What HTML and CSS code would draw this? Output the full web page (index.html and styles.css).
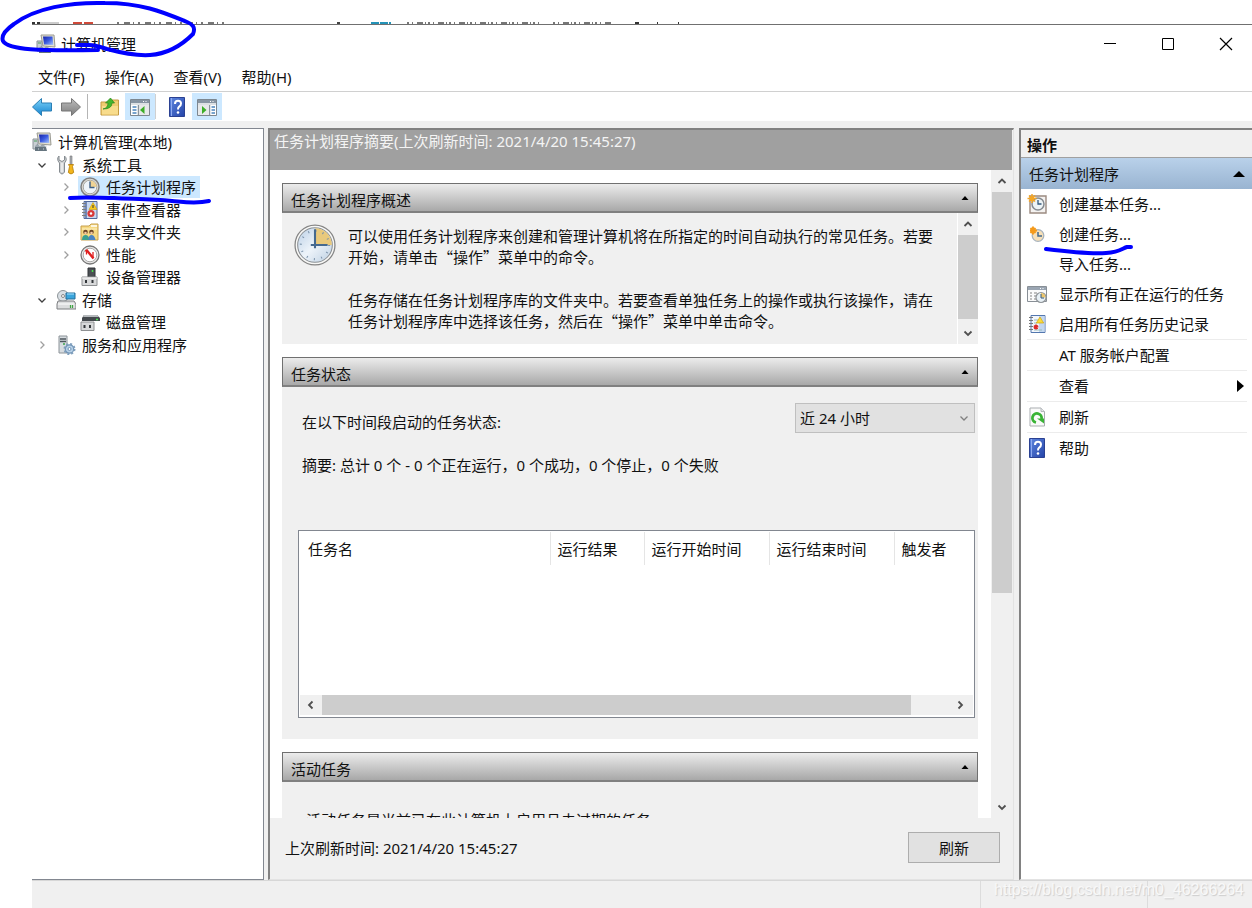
FILE: index.html
```html
<!DOCTYPE html>
<html lang="zh-CN">
<head>
<meta charset="utf-8">
<title>计算机管理</title>
<link rel="stylesheet" href="styles.css">
</head>
<body>
<svg class="defs" width="0" height="0" aria-hidden="true">
  <defs>
    <linearGradient id="g-screen" x1="0" y1="0" x2="1" y2="1"><stop offset="0" stop-color="#1522a8"/><stop offset=".5" stop-color="#3b5be0"/><stop offset="1" stop-color="#a8c8ff"/></linearGradient>
    <linearGradient id="g-help" x1="0" y1="0" x2="1" y2="1"><stop offset="0" stop-color="#5f88e0"/><stop offset="1" stop-color="#2443a8"/></linearGradient>
    <linearGradient id="g-blue" x1="0" y1="0" x2="0" y2="1"><stop offset="0" stop-color="#7fd4fa"/><stop offset="1" stop-color="#1583cf"/></linearGradient>
    <linearGradient id="g-gray" x1="0" y1="0" x2="0" y2="1"><stop offset="0" stop-color="#bdbdbd"/><stop offset="1" stop-color="#7d7d7d"/></linearGradient>
    <linearGradient id="g-face" x1="0" y1="0" x2="1" y2="1"><stop offset="0" stop-color="#b9cfe6"/><stop offset=".5" stop-color="#eef4fa"/><stop offset="1" stop-color="#bccfe2"/></linearGradient>
    <symbol id="i-computer" viewBox="0 0 20 20">
      <path d="M1 7h5v10H1z" fill="#c9cfd3" stroke="#8b9399"/><path d="M2 9h3" stroke="#4b9b5a"/>
      <path d="M5 1l13 0 1 12-12-1z" fill="#e3e1d2" stroke="#9a9a92"/>
      <path d="M7 2.500h9.500l.8 8.500-9.300-.6z" fill="url(#g-screen)"/>
      <path d="M3 14q2-3 5 0 3-3 6 1l1 4H3z" fill="#66757f"/><path d="M3 14h12M6 17h1m4 0h1" stroke="#cfd8dd" stroke-width="1.200"/>
    </symbol>
    <symbol id="i-tools" viewBox="0 0 20 20">
      <path d="M3 1v4l3 1.500L8.500 5V1Q12 4 8.500 8v9q-2.500 4-5 0V8Q0 4 3 1z" fill="#d0d3d5" stroke="#858b90"/><path d="M6 8v9" stroke="#fff"/>
      <path d="M14 1h2v9h-2z" fill="#a8adb2" stroke="#777" stroke-width=".6"/><path d="M12.500 9.500h5l-1 2 1.200 6q-2.700 3-5.400 0l1.200-6z" fill="#f2b51d" stroke="#b37c0a" stroke-width=".8"/>
    </symbol>
    <symbol id="i-clock" viewBox="0 0 40 40">
      <circle cx="20" cy="20" r="19" fill="#f8f8f6" stroke="#858585" stroke-width="1.200"/>
      <circle cx="20" cy="20" r="16.500" fill="url(#g-face)" stroke="#8a8f94" stroke-width="1"/>
      <path d="M20 20V4A16 16 0 0 1 36 20z" fill="#e9c97c"/>
      <circle cx="20" cy="20" r="13.500" fill="none" stroke="#7c93ab" stroke-width="2" stroke-dasharray="1 6.070"/>
      <path d="M20 5v18M16 20h16" stroke="#45698f" stroke-width="2"/>
    </symbol>
    <symbol id="i-clock-s" viewBox="0 0 20 20">
      <circle cx="10" cy="10" r="9" fill="#dfddd7" stroke="#828282" stroke-width="1.500"/>
      <circle cx="10" cy="10" r="6.800" fill="#eef4fa" stroke="#a5a5a0"/>
      <path d="M10 10V3.500A6.500 6.500 0 0 1 16.500 10z" fill="#efd395"/><path d="M10 4.500V10.500h4.500" fill="none" stroke="#3d5f86" stroke-width="1.400"/>
    </symbol>
    <symbol id="i-event" viewBox="0 0 20 20">
      <path d="M4 1.500h13v17H4z" fill="#c7d8f1" stroke="#52699b"/><path d="M5 2h2v16H5z" fill="#7188b8"/>
      <path d="M2 3.500h4M2 6.500h4M2 9.500h4M2 12.500h4M2 15.500h4" stroke="#7d7d7d" stroke-width="1.200"/>
      <path d="M13 2.500l4 7H9z" fill="#f9ca1e" stroke="#c89a08" stroke-width=".6"/><path d="M13 5v3" stroke="#333"/>
      <circle cx="11" cy="13.500" r="3.600" fill="#d93a3a"/><circle cx="11" cy="13.500" r="1.200" fill="#fff"/>
    </symbol>
    <symbol id="i-history" viewBox="0 0 20 20">
      <path d="M4 1.500h14v17H4z" fill="#f2f6fc" stroke="#5377ae"/><path d="M12 2h5.500v16H12z" fill="#c3d7f0"/>
      <path d="M2 3.500h4M2 6.500h4M2 9.500h4M2 12.500h4M2 15.500h4" stroke="#777" stroke-width="1.200"/>
      <path d="M7 6h4M7 9h3M7 16h8" stroke="#9bb" />
      <path d="M13 3l3.700 6H9.300z" fill="#fadb3c" stroke="#d3a50b" stroke-width=".7"/><path d="M9 10.500v5M6.800 11.700l4.400 2.600M11.200 11.700l-4.400 2.600" stroke="#dc2a2a" stroke-width="1.700"/>
    </symbol>
    <symbol id="i-share" viewBox="0 0 20 20">
      <path d="M1 4h8l2-2h7v16H1z" fill="#f6d983" stroke="#c7a04c"/><path d="M11 4h6" stroke="#fff" stroke-width="1.500"/><path d="M2 7h15" stroke="#fdf0c4"/>
      <circle cx="5.500" cy="10" r="2.300" fill="#6b4426"/><path d="M2 18q0-5 3.500-5t4 5z" fill="#3aa08f"/>
      <circle cx="11.500" cy="10" r="2.300" fill="#6b4426"/><path d="M8.500 18q0-5 3-5t4 5z" fill="#4a83c4"/><circle cx="5.500" cy="11" r="1.300" fill="#f3caa3"/><circle cx="11.500" cy="11" r="1.300" fill="#f3caa3"/>
    </symbol>
    <symbol id="i-perf" viewBox="0 0 20 20">
      <circle cx="10" cy="10" r="9" fill="#ecebea" stroke="#777" stroke-width="1.300"/><circle cx="10" cy="10" r="6.800" fill="#fff" stroke="#a8a8a8"/>
      <path d="M5.500 6.500l1.500-1 6.500 8" fill="none" stroke="#e02020" stroke-width="2.400"/><path d="M6.500 6v3.500M13 7v6" stroke="#e02020" stroke-width="1.300"/>
    </symbol>
    <symbol id="i-device" viewBox="0 0 20 20">
      <path d="M8 1h7v10H8z" fill="#4b5054" stroke="#303336"/><path d="M12.500 3v2" stroke="#48e04c" stroke-width="1.500"/>
      <path d="M2 10h15v8.500H2z" fill="#d8d9da" stroke="#8e9092"/><path d="M2 11h15" stroke="#fff"/><path d="M6 13v3M12.500 13v3" stroke="#33373a" stroke-width="2"/>
    </symbol>
    <symbol id="i-storage" viewBox="0 0 20 20">
      <circle cx="7" cy="6" r="5.500" fill="#d9dfe4" stroke="#8d9498"/><circle cx="7" cy="6" r="1.500" fill="#fff" stroke="#888"/>
      <path d="M10 3h9v6h-9z" fill="#3aa5dc" stroke="#256f9b"/><path d="M11 4h7" stroke="#a8e2ff"/>
      <path d="M2 11h16l2 3v5H1v-5z" fill="#dcddde" stroke="#7d7f81"/><path d="M2 14h16" stroke="#fff"/><path d="M14.500 15v3m2-3v3" stroke="#42a544" stroke-width="1.200"/>
    </symbol>
    <symbol id="i-disk" viewBox="0 0 20 20">
      <path d="M4 3h13l3 3v3H2V6z" fill="#44494d"/><path d="M4 3h13l2 2H3z" fill="#b5b9bc"/><path d="M16 7.500h2" stroke="#4be253" stroke-width="1.500"/>
      <path d="M1 10h13v8.500H1z" fill="#d8d9da" stroke="#8e9092"/><path d="M4.500 13v3m5.500-3v3" stroke="#33373a" stroke-width="2"/>
    </symbol>
    <symbol id="i-services" viewBox="0 0 20 20">
      <path d="M3 1h8v17H3z" fill="#d7dce0" stroke="#8c9398"/><path d="M4 4h6M4 6.500h6" stroke="#4d565c" stroke-width="1.300"/><path d="M7 9h2" stroke="#3aa54a" stroke-width="1.500"/>
      <circle cx="13.500" cy="14" r="4.200" fill="#b8d1e8" stroke="#6f93b5" stroke-width="1.200"/><circle cx="13.500" cy="14" r="5" fill="none" stroke="#7f9fbd" stroke-width="2" stroke-dasharray="2 1.930"/><circle cx="13.500" cy="14" r="1.500" fill="#fff" stroke="#6f93b5"/>
    </symbol>
    <symbol id="i-back" viewBox="0 0 20 20"><path d="M.5 10l9-8.500V6H19.500v8H9.500v4.500z" fill="url(#g-blue)" stroke="#2b7fb5"/></symbol>
    <symbol id="i-forward" viewBox="0 0 20 20"><path d="M19.500 10l-9-8.500V6H.5v8h10v4.500z" fill="url(#g-gray)" stroke="#777"/></symbol>
    <symbol id="i-folder" viewBox="0 0 20 20">
      <path d="M1 5h9l2-2h6.500v15H1z" fill="#f0cc70" stroke="#c59b42"/><path d="M2 9h16v8.500H2z" fill="#f8dc8c"/>
      <path d="M3 12q5-1 5-6H5.500L10.500 1l4 5H12q0 6-9 6z" fill="#45b52d" stroke="#28881b" stroke-width=".7"/>
    </symbol>
    <symbol id="i-pane-left" viewBox="0 0 20 20">
      <path d="M.5 2.500h19v16H.5z" fill="#fff" stroke="#7d8790"/><path d="M1 3h18v3H1z" fill="#8795a3"/><path d="M13 4.500h1m1.500 0h1" stroke="#fff"/><path d="M1 7h18" stroke="#b9c1c8"/>
      <path d="M8.500 8v10" stroke="#8b949c" stroke-width="1.500"/><path d="M2.500 10h4m-4 3h4m-4 3h4" stroke="#4a84bd" stroke-width="1.300"/><path d="M10 8h9v10h-9z" fill="#e7e9ea"/><path d="M14.500 9v8L10 13z" fill="#3cae28"/>
    </symbol>
    <symbol id="i-pane-right" viewBox="0 0 20 20">
      <path d="M.5 2.500h19v16H.5z" fill="#fff" stroke="#7d8790"/><path d="M1 3h18v3H1z" fill="#8795a3"/><path d="M13 4.500h1m1.500 0h1" stroke="#fff"/><path d="M1 7h18" stroke="#b9c1c8"/>
      <path d="M12.500 8v10" stroke="#8b949c" stroke-width="1.500"/><path d="M14.500 10h3.500m-3.500 3h3.500m-3.500 3h3.500" stroke="#4a84bd" stroke-width="1.300"/><path d="M1 8h11v10H1z" fill="#e7e9ea"/><path d="M5 9v8l4.500-4z" fill="#3cae28"/>
    </symbol>
    <symbol id="i-help" viewBox="0 0 20 20">
      <path d="M2.500.5h15v19h-15z" fill="url(#g-help)" stroke="#2b4192"/><path d="M4.500 1v18" stroke="#8faaf0"/>
      <path d="M8 7q0-3.300 3-3.300T14 6.500q0 1.800-1.600 2.900T11 12.500" fill="none" stroke="#fff" stroke-width="2"/><circle cx="11" cy="15.500" r="1.300" fill="#fff"/>
    </symbol>
    <symbol id="i-basic-task" viewBox="0 0 20 20">
      <path d="M3 2h16v17H3z" fill="#f4f2f0" stroke="#9b8a80" stroke-width="1.400"/><circle cx="11" cy="10" r="6" fill="#edf3f5" stroke="#858a90" stroke-width="1.500"/><path d="M11 6v4h3.500" fill="none" stroke="#32587c" stroke-width="1.300"/>
      <path d="M5 0v9M.5 4.500h9M2 1.500l6 6M8 1.500l-6 6" stroke="#f5a623" stroke-width="1.500"/>
    </symbol>
    <symbol id="i-task" viewBox="0 0 20 20">
      <circle cx="11" cy="11.500" r="5.800" fill="#f7e0b8" stroke="#a8b3bd" stroke-width="1.300"/><path d="M11 8v4h4" fill="none" stroke="#42688e" stroke-width="1.500"/>
      <path d="M6 2.500v8M3.500 4l5 5M8.500 4l-5 5M3 6.500h7" stroke="#f59a1a" stroke-width="1.900"/>
    </symbol>
    <symbol id="i-running" viewBox="0 0 20 20">
      <path d="M.5 2.500h19v15H.5z" fill="#fafafa" stroke="#888f96"/><path d="M1 3h18v3H1z" fill="#9aa5b2"/><path d="M13 4.500h1m1.500 0h1" stroke="#fff"/>
      <path d="M3 9h2m2 0h3m-7 3h2m2 0h2m-6 3h2m2 0h2" stroke="#858585"/><circle cx="14" cy="13.500" r="5" fill="#e8f0f5" stroke="#8f9498" stroke-width="1.200"/><path d="M14 13.500V9a4.500 4.500 0 0 1 4.500 4.500z" fill="#edc66b"/><path d="M14 10v4h3" fill="none" stroke="#31577f"/>
    </symbol>
    <symbol id="i-refresh" viewBox="0 0 20 20">
      <path d="M3 1h11l3.500 3.500V19H3z" fill="#fafafa" stroke="#a9adb0"/><path d="M14 1v3.500h3.500" fill="#e4e6e8" stroke="#b6babd"/>
      <path d="M9 15.500A4.600 4.600 0 1 1 14.500 12" fill="none" stroke="#39b335" stroke-width="2.800"/><path d="M10 11.500h7v5z" fill="#39b335"/>
    </symbol>
    <symbol id="i-up" viewBox="0 0 10 10"><path d="M1.500 7L5 3.500 8.500 7" fill="none" stroke="#505050" stroke-width="1.800"/></symbol>
    <symbol id="i-down" viewBox="0 0 10 10"><path d="M1.500 3.500L5 7l3.500-3.500" fill="none" stroke="#505050" stroke-width="1.800"/></symbol>
    <symbol id="i-left" viewBox="0 0 10 10"><path d="M6.500 1.500L3 5l3.500 3.500" fill="none" stroke="#505050" stroke-width="1.800"/></symbol>
    <symbol id="i-right" viewBox="0 0 10 10"><path d="M3.500 1.500L7 5 3.500 8.500" fill="none" stroke="#505050" stroke-width="1.800"/></symbol>
    <symbol id="i-open" viewBox="0 0 10 10"><path d="M1.500 3.500L5 7l3.500-3.500" fill="none" stroke="#404040" stroke-width="1.300"/></symbol>
    <symbol id="i-closed" viewBox="0 0 10 10"><path d="M3.500 1.500L7 5 3.500 8.500" fill="none" stroke="#a0a0a0" stroke-width="1.300"/></symbol>
    <symbol id="i-collapse" viewBox="0 0 10 10"><path d="M1.500 7L5 3l3.500 4z" fill="#000"/></symbol>
  </defs>
</svg>

<div class="desktop">
  <div class="backdrop" aria-hidden="true">
    <svg width="660" height="2" viewBox="0 0 660 2">
      <path d="M0 1h8" stroke="#333" stroke-width="2" stroke-dasharray="3 2"/><path d="M8 1h19" stroke="#ccc" stroke-width="2"/>
      <path d="M41 1h20" stroke="#d04a3a" stroke-width="2" stroke-dasharray="9 2"/>
      <path d="M85 1h109" stroke="#777" stroke-width="2" stroke-dasharray="2 5 6 3 1 4"/>
      <path d="M305 1h3" stroke="#444" stroke-width="2"/><path d="M339 1h20" stroke="#2493b8" stroke-width="2" stroke-dasharray="8 1"/>
      <path d="M375 1h136M521 1h60" stroke="#777" stroke-width="2" stroke-dasharray="2 3 1 4 6 2 1 2"/>
      <path d="M603 1h4m18 0h1m20 0h1" stroke="#333" stroke-width="2"/>
    </svg>
  </div>
  <div class="window">
    <header class="titlebar">
      <svg class="icon"><use href="#i-computer"/></svg>
      <h1 class="title">计算机管理</h1>
      <div class="window-buttons">
        <button type="button" aria-label="最小化"><svg width="14" height="14"><path d="M1 6.500h12" stroke="#000"/></svg></button>
        <button type="button" aria-label="最大化"><svg width="14" height="14"><path d="M1.500 1.500h11v11h-11z" fill="none" stroke="#000"/></svg></button>
        <button type="button" aria-label="关闭"><svg width="14" height="14"><path d="M1 1l12 12M13 1L1 13" stroke="#000" stroke-width="1.200"/></svg></button>
      </div>
    </header>
    <nav class="menubar">
      <button type="button">文件(F)</button>
      <button type="button">操作(A)</button>
      <button type="button">查看(V)</button>
      <button type="button">帮助(H)</button>
    </nav>
    <div class="toolbar">
      <button type="button" aria-label="后退"><svg class="icon"><use href="#i-back"/></svg></button>
      <button type="button" aria-label="前进"><svg class="icon"><use href="#i-forward"/></svg></button>
      <span class="rule"></span>
      <button type="button" aria-label="上一级"><svg class="icon"><use href="#i-folder"/></svg></button>
      <button type="button" class="on" aria-label="显示控制台树"><svg class="icon"><use href="#i-pane-left"/></svg></button>
      <span class="rule"></span>
      <button type="button" aria-label="帮助"><svg class="icon"><use href="#i-help"/></svg></button>
      <button type="button" class="on" aria-label="显示操作窗格"><svg class="icon"><use href="#i-pane-right"/></svg></button>
    </div>

    <div class="panes">
      <aside class="tree-pane">
        <ul class="tree">
          <li class="root"><svg class="icon"><use href="#i-computer"/></svg><span>计算机管理(本地)</span></li>
          <li><svg class="chev"><use href="#i-open"/></svg><svg class="icon"><use href="#i-tools"/></svg><span>系统工具</span></li>
          <li class="sub"><svg class="chev"><use href="#i-closed"/></svg><div class="selected"><svg class="icon"><use href="#i-clock-s"/></svg><span>任务计划程序</span></div></li>
          <li class="sub"><svg class="chev"><use href="#i-closed"/></svg><svg class="icon"><use href="#i-event"/></svg><span>事件查看器</span></li>
          <li class="sub"><svg class="chev"><use href="#i-closed"/></svg><svg class="icon"><use href="#i-share"/></svg><span>共享文件夹</span></li>
          <li class="sub"><svg class="chev"><use href="#i-closed"/></svg><svg class="icon"><use href="#i-perf"/></svg><span>性能</span></li>
          <li class="sub"><svg class="chev"></svg><svg class="icon"><use href="#i-device"/></svg><span>设备管理器</span></li>
          <li><svg class="chev"><use href="#i-open"/></svg><svg class="icon"><use href="#i-storage"/></svg><span>存储</span></li>
          <li class="sub"><svg class="chev"></svg><svg class="icon"><use href="#i-disk"/></svg><span>磁盘管理</span></li>
          <li><svg class="chev"><use href="#i-closed"/></svg><svg class="icon"><use href="#i-services"/></svg><span>服务和应用程序</span></li>
        </ul>
      </aside>

      <main class="center">
        <h2 class="banner">任务计划程序摘要(上次刷新时间: 2021/4/20 15:45:27)</h2>
        <div class="viewport">
          <div class="sections">
            <section class="section">
              <h3 class="section-head"><span>任务计划程序概述</span><svg class="tri"><use href="#i-collapse"/></svg></h3>
              <div class="overview">
                <svg class="big-clock"><use href="#i-clock"/></svg>
                <div class="prose">
                  <p>可以使用任务计划程序来创建和管理计算机将在所指定的时间自动执行的常见任务。若要开始，请单击“操作”菜单中的命令。</p>
                  <p>任务存储在任务计划程序库的文件夹中。若要查看单独任务上的操作或执行该操作，请在任务计划程序库中选择该任务，然后在“操作”菜单中单击命令。</p>
                </div>
                <div class="vbar short"><svg class="arrow"><use href="#i-up"/></svg><div class="thumb"></div><svg class="arrow"><use href="#i-down"/></svg></div>
              </div>
            </section>
            <section class="section">
              <h3 class="section-head"><span>任务状态</span><svg class="tri"><use href="#i-collapse"/></svg></h3>
              <div class="status">
                <div class="period">
                  <label for="period">在以下时间段启动的任务状态:</label>
                  <div class="select-wrap"><select id="period"><option>近 24 小时</option></select><svg class="drop"><use href="#i-open"/></svg></div>
                </div>
                <p class="summary">摘要: 总计 0 个 - 0 个正在运行，0 个成功，0 个停止，0 个失败</p>
                <div class="listbox">
                  <table>
                    <thead><tr><th class="c-name">任务名</th><th class="c-result">运行结果</th><th class="c-time">运行开始时间</th><th class="c-time">运行结束时间</th><th>触发者</th></tr></thead>
                  </table>
                  <div class="hbar"><svg class="arrow"><use href="#i-left"/></svg><div class="track"><div class="thumb"></div></div><svg class="arrow"><use href="#i-right"/></svg></div>
                </div>
              </div>
            </section>
            <section class="section">
              <h3 class="section-head"><span>活动任务</span><svg class="tri"><use href="#i-collapse"/></svg></h3>
              <p class="active">活动任务是当前已在此计算机上启用且未过期的任务。</p>
            </section>
          </div>
          <div class="vbar"><svg class="arrow"><use href="#i-up"/></svg><div class="track"><div class="thumb"></div></div><svg class="arrow"><use href="#i-down"/></svg></div>
        </div>
        <footer class="foot"><span>上次刷新时间: 2021/4/20 15:45:27</span><button type="button" class="push">刷新</button></footer>
      </main>

      <aside class="actions">
        <h2 class="actions-title">操作</h2>
        <h3 class="actions-head"><span>任务计划程序</span><svg width="12" height="6"><path d="M0 6l6-6 6 6z"/></svg></h3>
        <ul class="action-list">
          <li><button type="button"><svg class="icon"><use href="#i-basic-task"/></svg><span>创建基本任务...</span></button></li>
          <li><button type="button"><svg class="icon"><use href="#i-task"/></svg><span>创建任务...</span></button></li>
          <li><button type="button"><svg class="icon"></svg><span>导入任务...</span></button></li>
          <li><button type="button"><svg class="icon"><use href="#i-running"/></svg><span>显示所有正在运行的任务</span></button></li>
          <li><button type="button"><svg class="icon"><use href="#i-history"/></svg><span>启用所有任务历史记录</span></button></li>
          <li class="sep"><button type="button"><svg class="icon"></svg><span>AT 服务帐户配置</span></button></li>
          <li class="sep"><button type="button"><svg class="icon"></svg><span>查看</span><svg class="more" width="7" height="12"><path d="M0 0l7 6-7 6z"/></svg></button></li>
          <li class="sep"><button type="button"><svg class="icon"><use href="#i-refresh"/></svg><span>刷新</span></button></li>
          <li class="sep"><button type="button"><svg class="icon"><use href="#i-help"/></svg><span>帮助</span></button></li>
        </ul>
      </aside>
    </div>
    <div class="statusbar"><span></span><span class="cell"></span><span class="cell end"></span></div>
  </div>

  <svg class="ink" width="260" height="220" aria-hidden="true">
    <path d="M77 45h12c6 0 12 2 18 4C122 53 136 56 150 55 166 54 180 47 193 34 196 27 192 24 187 22 165 13 143 3 105 3 70 2 35 8 14 24 4 31 1 36 3 41 8 50 40 51 98 50"/>
    <path d="M70 198c16-1 30 0 44 0 18 1 38 1 58 3 12 1 24 3 37 0"/>
  </svg>
  <svg class="ink ink-right" width="100" height="20" aria-hidden="true"><path d="M4 7c24 3 44 5 60 4 14-1 17-5 21-6h4"/></svg>
  <div class="watermark">https://blog.csdn.net/m0_46266264</div>
</div>
</body>
</html>
```
FILE: styles.css
```css
* { box-sizing: border-box; }
body {
  margin: 0;
  background: #fff;
  color: #111;
  font: 15px/22px "Noto Sans", "Noto Sans CJK SC", sans-serif;
}
h1, h2, h3, p, ul { margin: 0; padding: 0; font-size: 15px; font-weight: 400; }
ul { list-style: none; }
button, select { font: inherit; color: inherit; background: none; border: 0; padding: 0; }
svg { flex: none; }
.defs { position: absolute; }
.icon { width: 20px; height: 20px; }
.chev, .tri, .arrow { width: 10px; height: 10px; }

.desktop { position: relative; height: 100vh; padding-left: 32px; overflow: hidden; display: flex; flex-direction: column; }
.backdrop { height: 24px; display: flex; align-items: flex-end; }
.window { flex: 1; min-height: 0; display: flex; flex-direction: column; border-top: 1px solid #707070; }

.titlebar { display: flex; align-items: center; height: 37px; padding-left: 4px; }
.title { margin-left: 5px; }
.window-buttons { margin: 0 -3px 0 auto; display: flex; }
.window-buttons button { width: 58px; height: 36px; display: flex; align-items: center; justify-content: center; }

.menubar { display: flex; gap: 20px; height: 30px; padding-left: 6px; align-items: center; border-bottom: 1px solid #d0d0d0; }
.toolbar { display: flex; align-items: center; height: 29px; }
.toolbar button { width: 29px; height: 27px; display: flex; align-items: center; }
.toolbar button.on { width: 30px; justify-content: center; background: #cce8ff; }
.toolbar .rule { width: 1px; height: 25px; background: #b5b5b5; margin: 0 12px 0 0; }
.toolbar button:nth-child(2) { width: 26px; }
.toolbar button:nth-child(4) { width: 25px; }
.toolbar button:nth-child(7) { width: 25px; }
.toolbar .rule:nth-child(6) { margin-right: 11px; background: #d0d0d0; }

.panes { flex: 1; min-height: 0; display: flex; gap: 4px; padding-top: 7px; background: #f0f0f0; }
.tree-pane { width: 232px; background: #fff; border: 1px solid #828790; border-left: 0; padding-top: 2px; }
.tree { display: grid; grid-template-rows: repeat(10, 1fr); height: 225px; }
.tree li { display: flex; align-items: center; padding-left: 5px; white-space: nowrap; }
.tree .root { padding-left: 0; }
.tree .sub { padding-left: 29px; }
.tree .icon { margin: 0 6px 0 9px; }
.tree .root .icon { margin-left: 0; }
.tree .selected { display: flex; align-items: center; margin-left: 7px; padding-right: 4px; background: #cce8ff; }
.tree .selected .icon { margin-left: 2px; }

.center { flex: 1; min-width: 0; display: flex; flex-direction: column; padding-right: 1px; border: 2px solid #828282; border-right: 1px solid #e3e3e3; border-bottom: 1px solid #e3e3e3; background: #f0f0f0; }
.banner { height: 40px; padding-left: 4px; background: #a0a0a0; color: #f4f4f4; }
.viewport { flex: 1; min-height: 0; overflow: hidden; display: flex; background: #fff; }
.sections { flex: 1; min-width: 0; display: flex; flex-direction: column; gap: 13px; padding: 13px 13px 0 12px; }
.section { background: #f0f0f0; }
.section-head { display: flex; align-items: center; justify-content: space-between; height: 30px; padding: 4px 7px 0 8px; border: 1px solid #707070; border-bottom: 2px solid #808080; background: linear-gradient(#ececec, #a8a8a8); }
.section-head .tri { margin-top: -4px; }
.overview { display: flex; height: 131px; }
.big-clock { width: 42px; height: 42px; margin: 11px 12px 0 12px; }
.prose { flex: 1; min-width: 0; padding: 12px 16px 0 0; line-height: 21px; font-family: "Noto Sans CJK SC", sans-serif; }
.prose p + p { margin-top: 22px; }
.vbar { width: 21px; display: flex; flex-direction: column; align-items: center; justify-content: space-between; background: #f0f0f0; padding: 6px 0; }
.vbar .track { flex: 1; width: 20px; margin: 6px 0; }
.vbar .thumb { width: 20px; height: 401px; background: #cdcdcd; }
.vbar.short { border-left: 1px solid #fff; }
.vbar.short .thumb { height: 84px; margin-bottom: 4px; }

.status { height: 352px; padding: 16px 3px 0 16px; display: flex; flex-direction: column; }
.period { display: flex; justify-content: space-between; align-items: center; padding-left: 4px; }
.period label { padding-top: 8px; }
.select-wrap { position: relative; width: 180px; }
.select-wrap select { appearance: none; width: 100%; height: 30px; padding: 0 4px; border: 1px solid #bfbfbf; background: #e1e1e1; border-radius: 0; }
.drop { position: absolute; right: 6px; top: 10px; width: 10px; height: 10px; opacity: .6; }
.summary { padding: 21px 0 0 4px; }
.listbox { height: 188px; margin-top: 54px; padding: 1px; border: 1px solid #828790; background: #fff; display: flex; flex-direction: column; justify-content: space-between; }
.listbox table { width: 100%; border-collapse: collapse; table-layout: fixed; }
.listbox th { height: 33px; padding: 0 0 0 7px; font-weight: 400; text-align: left; white-space: nowrap; border-left: 1px solid #e5e5e5; }
.listbox th:first-child { border-left: 0; padding-left: 8px; }
.c-name { width: 250px; }
.c-result { width: 94px; }
.c-time { width: 125px; }
.hbar { height: 20px; margin-bottom: 1px; display: flex; align-items: center; gap: 6px; padding: 0 8px 0 6px; background: #f0f0f0; }
.hbar .track { flex: 1; height: 20px; }
.hbar .thumb { width: 94%; height: 20px; background: #cdcdcd; }
.active { padding: 27px 0 0 24px; }
.foot { height: 61px; flex: none; display: flex; align-items: center; justify-content: space-between; padding: 0 12px 2px 15px; }
.push { width: 92px; height: 31px; border: 1px solid #adadad; background: #e1e1e1; }

.actions { width: 233px; margin-left: 1px; background: #fff; border-top: 2px solid #828282; border-left: 2px solid #828282; border-bottom: 1px solid #e3e3e3; }
.actions-title { height: 28px; padding: 4px 0 0 6px; background: #f0f0f0; border-bottom: 1px solid #a0a0a0; font-weight: 700; }
.actions-head { display: flex; align-items: center; justify-content: space-between; height: 31px; padding: 0 7px 0 8px; background: linear-gradient(#b9d1ea, #99b4d1); }
.action-list { padding: 0 5px 0 6px; }
.action-list button { width: 100%; height: 30px; display: flex; align-items: center; gap: 12px; white-space: nowrap; text-align: left; }
.action-list .sep { border-top: 1px solid #ececec; }
.more { margin-left: auto; margin-right: 3px; }

.statusbar { height: 28px; flex: none; display: flex; background: #f0f0f0; border-top: 1px solid #d7d7d7; }
.statusbar span { flex: 1; }
.statusbar .cell { flex: none; width: 167px; border-left: 1px solid #dcdcdc; }
.statusbar .end { width: 105px; }

.ink { position: absolute; left: 0; top: 0; fill: none; stroke: #00f; stroke-width: 4; stroke-linecap: round; pointer-events: none; }
.ink-right { left: 1042px; top: 242px; }
.watermark { position: absolute; right: 8px; bottom: 7px; font: 16px/22px "Liberation Sans", Arial, sans-serif; color: #f8f8f8; text-shadow: 1px 1px 1px #ccc; }
```
